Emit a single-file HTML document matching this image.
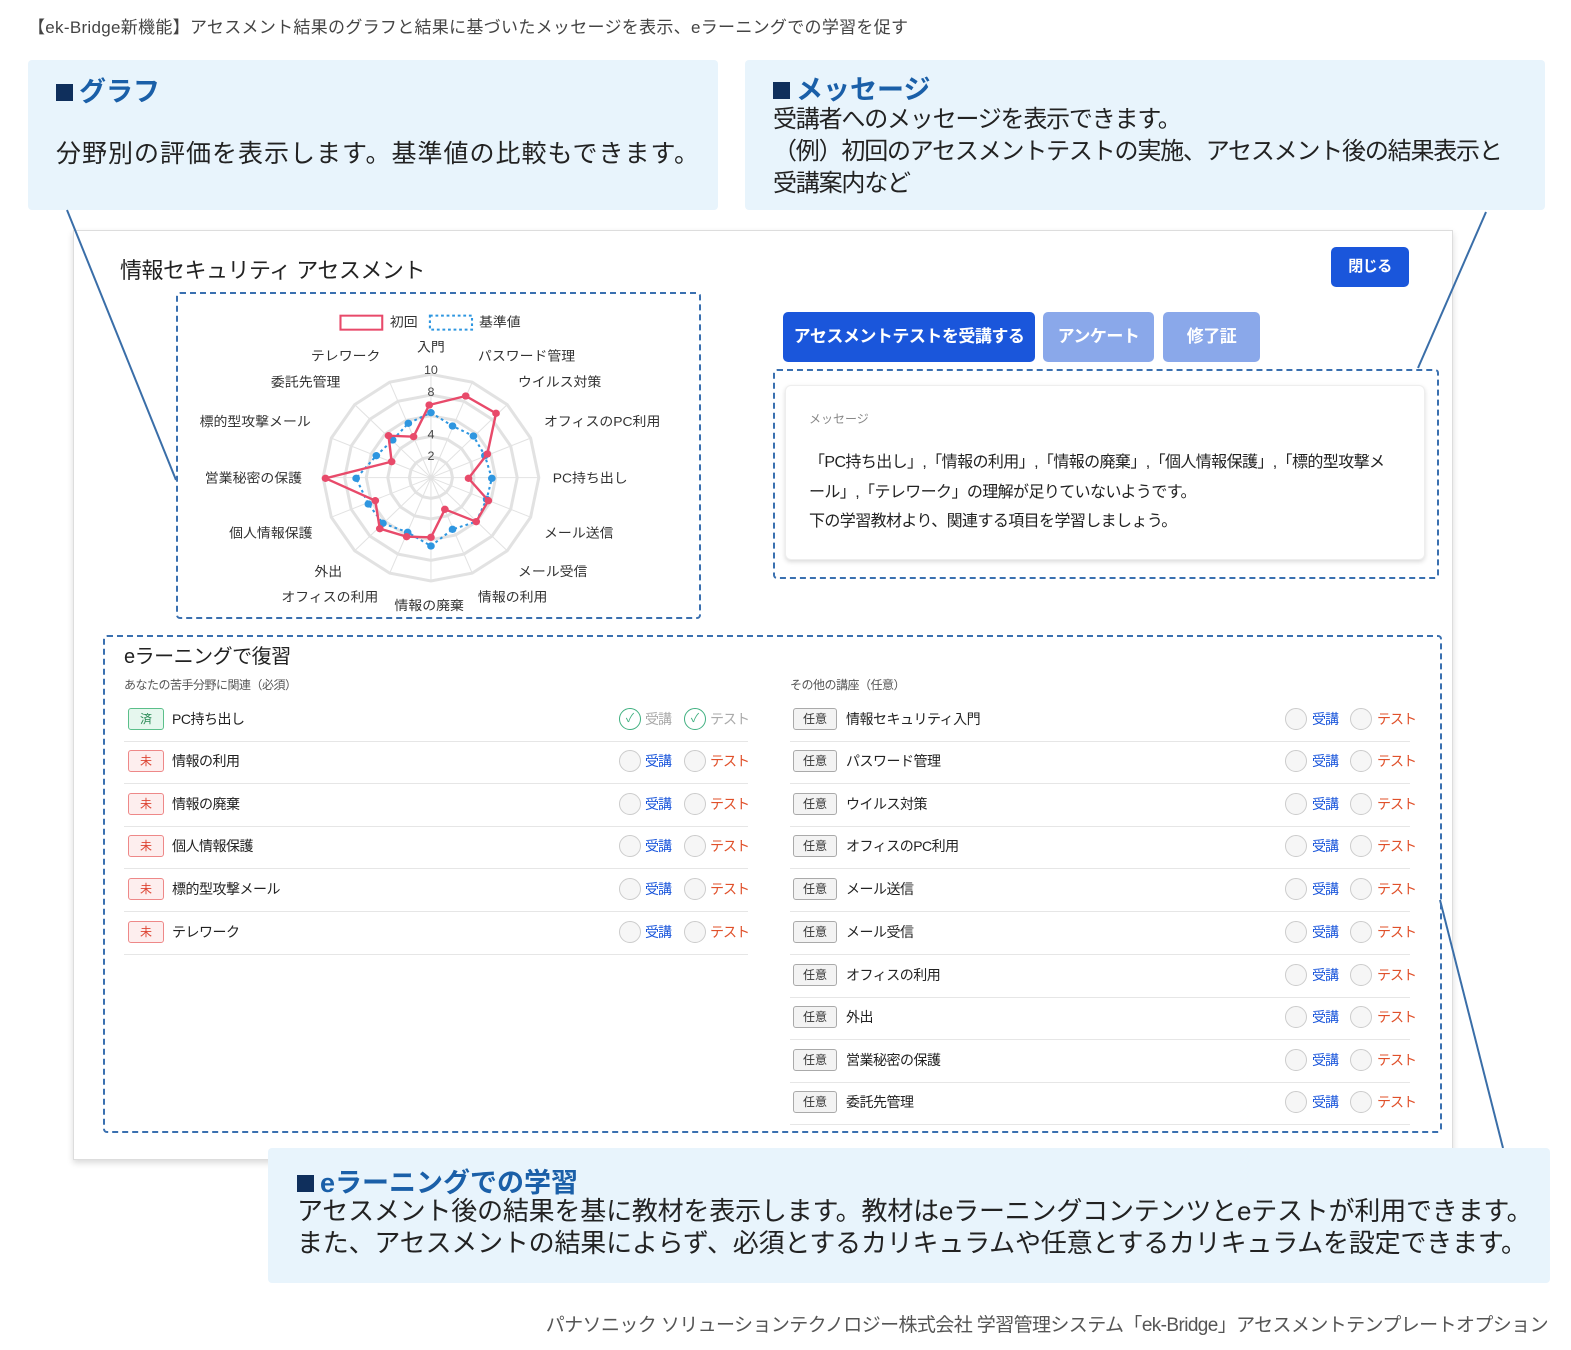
<!DOCTYPE html>
<html><head><meta charset="utf-8"><style>
*{margin:0;padding:0;box-sizing:border-box}
body{width:1571px;height:1350px;background:#fff;position:relative;overflow:hidden;font-family:"Liberation Sans","Noto Sans CJK JP",sans-serif;color:#222}
.a{position:absolute;white-space:nowrap}
.call{position:absolute;background:#e8f4fc;border-radius:4px}
.ct{color:#1a5fa8;font-weight:bold}
.sq{display:inline-block;width:17px;height:17px;background:#0f2f5c;margin-right:6px;vertical-align:0}
.dash{position:absolute;border:2.5px dashed #3a70b0;border-radius:4px}
.btn{position:absolute;color:#fff;font-weight:bold;font-size:17px;text-align:center;border-radius:5px;white-space:nowrap;letter-spacing:-0.5px}
.row{position:absolute;height:42px;border-bottom:1px solid #e6e6e6}
.bd{position:absolute;top:8px;height:22px;font-size:12px;text-align:center;line-height:20px;border-radius:3px}
.nm{position:absolute;top:8px;font-size:14px;line-height:22px;color:#222;white-space:nowrap;letter-spacing:-0.5px}
.c{position:absolute;top:8px;width:22px;height:22px;border:1.5px solid #ccc;border-radius:50%;background:#f6f6f6}
.ck{border-color:#40b080;background:#fff;color:#40b080;font-size:12px;text-align:center;line-height:19px}
.t{position:absolute;top:8px;font-size:14px;line-height:22px;white-space:nowrap;letter-spacing:-1px}
</style></head><body>
<div class="a" style="left:28px;top:13px;font-size:17px;color:#444;letter-spacing:0.3px">【ek-Bridge新機能】アセスメント結果のグラフと結果に基づいたメッセージを表示、eラーニングでの学習を促す</div>

<div class="call" style="left:28px;top:60px;width:690px;height:150px"></div>
<div class="a ct" style="left:56px;top:70px;font-size:27px"><span class="sq"></span>グラフ</div>
<div class="a" style="left:56px;top:134px;font-size:25px;color:#222;letter-spacing:1px">分野別の評価を表示します。基準値の比較もできます。</div>

<div class="call" style="left:745px;top:60px;width:800px;height:150px"></div>
<div class="a ct" style="left:773px;top:68px;font-size:27px"><span class="sq"></span>メッセージ</div>
<div class="a" style="left:773px;top:104px;font-size:24px;line-height:32px;letter-spacing:-1.2px">受講者へのメッセージを表示できます。<br>（例）初回のアセスメントテストの実施、アセスメント後の結果表示と<br>受講案内など</div>

<div style="position:absolute;left:73px;top:230px;width:1380px;height:930px;background:#fff;border:1px solid #ddd;box-shadow:0 3px 6px rgba(0,0,0,.15)"></div>
<svg class="a" style="left:0;top:0" width="1571" height="1350"><g stroke="#3a6ea8" stroke-width="2"><line x1="67" y1="210" x2="176" y2="480"/><line x1="1486" y1="212" x2="1418" y2="368"/><line x1="1440" y1="900" x2="1503" y2="1148"/></g></svg>
<div class="a" style="left:120px;top:253px;font-size:22px;color:#222;letter-spacing:-0.5px">情報セキュリティ アセスメント</div>
<div class="btn" style="left:1331px;top:247px;width:78px;height:40px;line-height:40px;background:#1a56db;font-size:15px">閉じる</div>

<div class="dash" style="left:176px;top:292px;width:525px;height:327px"></div>
<svg class="a" style="left:170px;top:290px" width="540" height="330" viewBox="0 0 1552 990" preserveAspectRatio="none" font-family="Liberation Sans,Noto Sans CJK JP,sans-serif" font-size="40" fill="#333">
<g transform="translate(750,563)" fill="none" stroke="#e2e2e2" stroke-width="3">
<polygon points="0,-100 38.27,-92.39 70.71,-70.71 92.39,-38.27 100,0 92.39,38.27 70.71,70.71 38.27,92.39 0,100 -38.27,92.39 -70.71,70.71 -92.39,38.27 -100,0 -92.39,-38.27 -70.71,-70.71 -38.27,-92.39" transform="scale(3.1)" vector-effect="non-scaling-stroke"/>
<polygon points="0,-100 38.27,-92.39 70.71,-70.71 92.39,-38.27 100,0 92.39,38.27 70.71,70.71 38.27,92.39 0,100 -38.27,92.39 -70.71,70.71 -92.39,38.27 -100,0 -92.39,-38.27 -70.71,-70.71 -38.27,-92.39" transform="scale(2.48)" vector-effect="non-scaling-stroke"/>
<polygon points="0,-100 38.27,-92.39 70.71,-70.71 92.39,-38.27 100,0 92.39,38.27 70.71,70.71 38.27,92.39 0,100 -38.27,92.39 -70.71,70.71 -92.39,38.27 -100,0 -92.39,-38.27 -70.71,-70.71 -38.27,-92.39" transform="scale(1.86)" vector-effect="non-scaling-stroke"/>
<polygon points="0,-100 38.27,-92.39 70.71,-70.71 92.39,-38.27 100,0 92.39,38.27 70.71,70.71 38.27,92.39 0,100 -38.27,92.39 -70.71,70.71 -92.39,38.27 -100,0 -92.39,-38.27 -70.71,-70.71 -38.27,-92.39" transform="scale(1.24)" vector-effect="non-scaling-stroke"/>
<polygon points="0,-100 38.27,-92.39 70.71,-70.71 92.39,-38.27 100,0 92.39,38.27 70.71,70.71 38.27,92.39 0,100 -38.27,92.39 -70.71,70.71 -92.39,38.27 -100,0 -92.39,-38.27 -70.71,-70.71 -38.27,-92.39" transform="scale(0.62)" vector-effect="non-scaling-stroke"/>
<path d="M0,0L0,-310M0,0L118.6,-286.4M0,0L219.2,-219.2M0,0L286.4,-118.6M0,0L310,0M0,0L286.4,118.6M0,0L219.2,219.2M0,0L118.6,286.4M0,0L0,310M0,0L-118.6,286.4M0,0L-219.2,219.2M0,0L-286.4,118.6M0,0L-310,0M0,0L-286.4,-118.6M0,0L-219.2,-219.2M0,0L-118.6,-286.4"/>
</g>
<g font-size="36" text-anchor="middle" fill="#444"><text x="750" y="252">10</text><text x="750" y="318">8</text><text x="750" y="446">4</text><text x="750" y="510">2</text></g>
<polygon fill="none" stroke="#2e96e0" stroke-width="6" stroke-dasharray="8,9" points="750,368 812,408 872,438 905,497 925,565 910,628 880,695 812,718 750,768 683,727 612,700 570,642 535,565 593,497 640,450 685,400"/>
<g fill="#2e96e0"><circle cx="750" cy="368" r="11"/><circle cx="812" cy="408" r="11"/><circle cx="872" cy="438" r="11"/><circle cx="905" cy="497" r="11"/><circle cx="925" cy="565" r="11"/><circle cx="910" cy="628" r="11"/><circle cx="812" cy="718" r="11"/><circle cx="750" cy="768" r="11"/><circle cx="683" cy="727" r="11"/><circle cx="612" cy="700" r="11"/><circle cx="570" cy="642" r="11"/><circle cx="535" cy="565" r="11"/><circle cx="593" cy="497" r="11"/><circle cx="640" cy="450" r="11"/><circle cx="685" cy="400" r="11"/></g>
<polygon fill="none" stroke="#e84a6a" stroke-width="7" points="745,345 850,318 937,370 912,492 858,565 915,632 880,695 790,658 750,742 680,740 603,716 590,632 447,565 637,515 628,437 700,440"/>
<g fill="#e84a6a"><circle cx="745" cy="345" r="11"/><circle cx="850" cy="318" r="11"/><circle cx="937" cy="370" r="11"/><circle cx="912" cy="492" r="11"/><circle cx="858" cy="565" r="11"/><circle cx="915" cy="632" r="11"/><circle cx="880" cy="695" r="11"/><circle cx="790" cy="658" r="11"/><circle cx="750" cy="742" r="11"/><circle cx="680" cy="740" r="11"/><circle cx="603" cy="716" r="11"/><circle cx="590" cy="632" r="11"/><circle cx="447" cy="565" r="11"/><circle cx="637" cy="515" r="11"/><circle cx="628" cy="437" r="11"/><circle cx="700" cy="440" r="11"/></g>
<rect x="490" y="77" width="120" height="42" fill="none" stroke="#e84a6a" stroke-width="6"/>
<rect x="747" y="77" width="121" height="42" fill="none" stroke="#2e96e0" stroke-width="6" stroke-dasharray="8,8"/>
<text x="632" y="110">初回</text><text x="888" y="110">基準値</text>
<text x="710" y="185">入門</text>
<text x="885" y="212">パスワード管理</text>
<text x="1000" y="290">ウイルス対策</text>
<text x="1075" y="408">オフィスのPC利用</text>
<text x="1100" y="578">PC持ち出し</text>
<text x="1075" y="742">メール送信</text>
<text x="1000" y="858">メール受信</text>
<text x="885" y="935">情報の利用</text>
<text x="645" y="960">情報の廃棄</text>
<text x="320" y="935">オフィスの利用</text>
<text x="415" y="858">外出</text>
<text x="170" y="742">個人情報保護</text>
<text x="100" y="578">営業秘密の保護</text>
<text x="85" y="408">標的型攻撃メール</text>
<text x="290" y="290">委託先管理</text>
<text x="405" y="212">テレワーク</text>
</svg>

<div class="btn" style="left:783px;top:312px;width:252px;height:50px;line-height:50px;background:#1a56db">アセスメントテストを受講する</div>
<div class="btn" style="left:1043px;top:312px;width:111px;height:50px;line-height:50px;background:#8aa8ea">アンケート</div>
<div class="btn" style="left:1163px;top:312px;width:97px;height:50px;line-height:50px;background:#8aa8ea">修了証</div>

<div class="dash" style="left:773px;top:369px;width:666px;height:210px"></div>
<div style="position:absolute;left:785px;top:385px;width:640px;height:175px;background:#fff;border:1px solid #eee;border-radius:6px;box-shadow:0 2px 5px rgba(0,0,0,.15)"></div>
<div class="a" style="left:809px;top:410px;font-size:12px;color:#888">メッセージ</div>
<div class="a" style="left:809px;top:448px;font-size:16px;line-height:29.5px;color:#222;letter-spacing:-0.6px">「PC持ち出し」,「情報の利用」,「情報の廃棄」,「個人情報保護」,「標的型攻撃メ<br>ール」,「テレワーク」の理解が足りていないようです。<br>下の学習教材より、関連する項目を学習しましょう。</div>

<div class="dash" style="left:103px;top:635px;width:1339px;height:498px"></div>
<div class="a" style="left:124px;top:640px;font-size:20px;color:#222;letter-spacing:-0.5px">eラーニングで復習</div>
<div class="a" style="left:124px;top:676px;font-size:12px;color:#555;letter-spacing:-0.5px">あなたの苦手分野に関連（必須）</div>
<div class="a" style="left:790px;top:676px;font-size:12px;color:#555;letter-spacing:-0.5px">その他の講座（任意）</div>

<div class="row" style="left:124px;top:700px;width:624px"><div class="bd" style="left:4px;width:36px;background:#e6f7ee;border:1px solid #5bbf8a;color:#2a8a55">済</div><div class="nm" style="left:48px">PC持ち出し</div><div class="c ck" style="left:495px">✓</div><div class="t" style="left:521px;color:#aaa">受講</div><div class="c ck" style="left:560px">✓</div><div class="t" style="left:586px;color:#aaa">テスト</div></div>
<div class="row" style="left:124px;top:742px;width:624px"><div class="bd" style="left:4px;width:36px;background:#fdeeee;border:1px solid #e88;color:#d43">未</div><div class="nm" style="left:48px">情報の利用</div><div class="c" style="left:495px"></div><div class="t" style="left:521px;color:#1a56db">受講</div><div class="c" style="left:560px"></div><div class="t" style="left:586px;color:#e0502a">テスト</div></div>
<div class="row" style="left:124px;top:785px;width:624px"><div class="bd" style="left:4px;width:36px;background:#fdeeee;border:1px solid #e88;color:#d43">未</div><div class="nm" style="left:48px">情報の廃棄</div><div class="c" style="left:495px"></div><div class="t" style="left:521px;color:#1a56db">受講</div><div class="c" style="left:560px"></div><div class="t" style="left:586px;color:#e0502a">テスト</div></div>
<div class="row" style="left:124px;top:827px;width:624px"><div class="bd" style="left:4px;width:36px;background:#fdeeee;border:1px solid #e88;color:#d43">未</div><div class="nm" style="left:48px">個人情報保護</div><div class="c" style="left:495px"></div><div class="t" style="left:521px;color:#1a56db">受講</div><div class="c" style="left:560px"></div><div class="t" style="left:586px;color:#e0502a">テスト</div></div>
<div class="row" style="left:124px;top:870px;width:624px"><div class="bd" style="left:4px;width:36px;background:#fdeeee;border:1px solid #e88;color:#d43">未</div><div class="nm" style="left:48px">標的型攻撃メール</div><div class="c" style="left:495px"></div><div class="t" style="left:521px;color:#1a56db">受講</div><div class="c" style="left:560px"></div><div class="t" style="left:586px;color:#e0502a">テスト</div></div>
<div class="row" style="left:124px;top:913px;width:624px"><div class="bd" style="left:4px;width:36px;background:#fdeeee;border:1px solid #e88;color:#d43">未</div><div class="nm" style="left:48px">テレワーク</div><div class="c" style="left:495px"></div><div class="t" style="left:521px;color:#1a56db">受講</div><div class="c" style="left:560px"></div><div class="t" style="left:586px;color:#e0502a">テスト</div></div>

<div class="row" style="left:790px;top:700px;width:620px"><div class="bd" style="left:3px;width:44px;background:#f3f3f3;border:1px solid #aaa;color:#333">任意</div><div class="nm" style="left:56px">情報セキュリティ入門</div><div class="c" style="left:495px"></div><div class="t" style="left:522px;color:#1a56db">受講</div><div class="c" style="left:560px"></div><div class="t" style="left:587px;color:#e0502a">テスト</div></div>
<div class="row" style="left:790px;top:742px;width:620px"><div class="bd" style="left:3px;width:44px;background:#f3f3f3;border:1px solid #aaa;color:#333">任意</div><div class="nm" style="left:56px">パスワード管理</div><div class="c" style="left:495px"></div><div class="t" style="left:522px;color:#1a56db">受講</div><div class="c" style="left:560px"></div><div class="t" style="left:587px;color:#e0502a">テスト</div></div>
<div class="row" style="left:790px;top:785px;width:620px"><div class="bd" style="left:3px;width:44px;background:#f3f3f3;border:1px solid #aaa;color:#333">任意</div><div class="nm" style="left:56px">ウイルス対策</div><div class="c" style="left:495px"></div><div class="t" style="left:522px;color:#1a56db">受講</div><div class="c" style="left:560px"></div><div class="t" style="left:587px;color:#e0502a">テスト</div></div>
<div class="row" style="left:790px;top:827px;width:620px"><div class="bd" style="left:3px;width:44px;background:#f3f3f3;border:1px solid #aaa;color:#333">任意</div><div class="nm" style="left:56px">オフィスのPC利用</div><div class="c" style="left:495px"></div><div class="t" style="left:522px;color:#1a56db">受講</div><div class="c" style="left:560px"></div><div class="t" style="left:587px;color:#e0502a">テスト</div></div>
<div class="row" style="left:790px;top:870px;width:620px"><div class="bd" style="left:3px;width:44px;background:#f3f3f3;border:1px solid #aaa;color:#333">任意</div><div class="nm" style="left:56px">メール送信</div><div class="c" style="left:495px"></div><div class="t" style="left:522px;color:#1a56db">受講</div><div class="c" style="left:560px"></div><div class="t" style="left:587px;color:#e0502a">テスト</div></div>
<div class="row" style="left:790px;top:913px;width:620px"><div class="bd" style="left:3px;width:44px;background:#f3f3f3;border:1px solid #aaa;color:#333">任意</div><div class="nm" style="left:56px">メール受信</div><div class="c" style="left:495px"></div><div class="t" style="left:522px;color:#1a56db">受講</div><div class="c" style="left:560px"></div><div class="t" style="left:587px;color:#e0502a">テスト</div></div>
<div class="row" style="left:790px;top:956px;width:620px"><div class="bd" style="left:3px;width:44px;background:#f3f3f3;border:1px solid #aaa;color:#333">任意</div><div class="nm" style="left:56px">オフィスの利用</div><div class="c" style="left:495px"></div><div class="t" style="left:522px;color:#1a56db">受講</div><div class="c" style="left:560px"></div><div class="t" style="left:587px;color:#e0502a">テスト</div></div>
<div class="row" style="left:790px;top:998px;width:620px"><div class="bd" style="left:3px;width:44px;background:#f3f3f3;border:1px solid #aaa;color:#333">任意</div><div class="nm" style="left:56px">外出</div><div class="c" style="left:495px"></div><div class="t" style="left:522px;color:#1a56db">受講</div><div class="c" style="left:560px"></div><div class="t" style="left:587px;color:#e0502a">テスト</div></div>
<div class="row" style="left:790px;top:1041px;width:620px"><div class="bd" style="left:3px;width:44px;background:#f3f3f3;border:1px solid #aaa;color:#333">任意</div><div class="nm" style="left:56px">営業秘密の保護</div><div class="c" style="left:495px"></div><div class="t" style="left:522px;color:#1a56db">受講</div><div class="c" style="left:560px"></div><div class="t" style="left:587px;color:#e0502a">テスト</div></div>
<div class="row" style="left:790px;top:1083px;width:620px"><div class="bd" style="left:3px;width:44px;background:#f3f3f3;border:1px solid #aaa;color:#333">任意</div><div class="nm" style="left:56px">委託先管理</div><div class="c" style="left:495px"></div><div class="t" style="left:522px;color:#1a56db">受講</div><div class="c" style="left:560px"></div><div class="t" style="left:587px;color:#e0502a">テスト</div></div>

<div class="call" style="left:268px;top:1148px;width:1282px;height:135px"></div>
<div class="a ct" style="left:297px;top:1161px;font-size:27px"><span class="sq"></span>eラーニングでの学習</div>
<div class="a" style="left:297px;top:1195px;font-size:26px;line-height:32px;color:#222;letter-spacing:-0.2px">アセスメント後の結果を基に教材を表示します。教材はeラーニングコンテンツとeテストが利用できます。<br>また、アセスメントの結果によらず、必須とするカリキュラムや任意とするカリキュラムを設定できます。</div>

<div class="a" style="right:23px;top:1310px;font-size:19px;color:#555;letter-spacing:-0.6px">パナソニック ソリューションテクノロジー株式会社 学習管理システム「ek-Bridge」アセスメントテンプレートオプション</div>
</body></html>
